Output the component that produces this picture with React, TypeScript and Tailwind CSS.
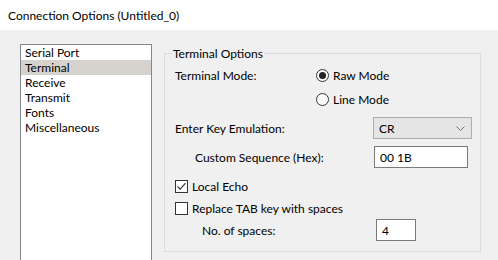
import React from 'react';

const items = ['Serial Port', 'Terminal', 'Receive', 'Transmit', 'Fonts', 'Miscellaneous'];

function Radio({ checked, label }: { checked?: boolean; label: string }) {
  return (
    <label className="flex items-center gap-[4px]">
      <span className="w-[13px] h-[13px] rounded-full border border-[#333] bg-white flex items-center justify-center">
        {checked && <span className="w-[7px] h-[7px] rounded-full bg-[#222]" />}
      </span>
      <span>{label}</span>
    </label>
  );
}

function Check({ checked, label }: { checked?: boolean; label: string }) {
  return (
    <label className="flex items-center gap-[4px]">
      <span className="w-[13px] h-[13px] border border-[#333] bg-white flex items-center justify-center">
        {checked && (
          <svg width="11" height="11" viewBox="0 0 11 11">
            <path d="M1.5 5.5 L4.2 8.2 L9.5 2.2" fill="none" stroke="#333" strokeWidth="1.1" />
          </svg>
        )}
      </span>
      <span>{label}</span>
    </label>
  );
}

export default function App() {
  return (
    <div className="w-[498px] h-[260px] bg-[#f0f0f0] overflow-hidden text-[12px] leading-[15px] text-black font-['Lato','Noto_Sans',sans-serif]">
      {/* Title */}
      <div className="h-[30px] bg-white px-[8px] flex items-center">Connection Options (Untitled_0)</div>

      <div className="flex pl-[20px] pt-[14px]">
        {/* Category list */}
        <ul className="w-[132px] h-[240px] shrink-0 border border-[#828790] bg-white">
          {items.map((it) => (
            <li key={it} className={`h-[15px] pl-[4px] ${it === 'Terminal' ? 'bg-[#d6d3cf]' : ''}`}>
              {it}
            </li>
          ))}
        </ul>

        {/* Terminal options group */}
        <fieldset className="ml-[12px] mt-[2px] w-[317px] h-[206px] border border-[#dcdcdc] pl-[10px]">
          <legend className="ml-[-3px] px-[1px]">Terminal Options</legend>

          <div className="mt-[2px] flex">
            <div className="w-[141px] h-[24px] flex items-center">Terminal Mode:</div>
            <div className="flex flex-col">
              <div className="h-[24px] flex items-center">
                <Radio checked label="Raw Mode" />
              </div>
              <div className="h-[24px] flex items-center">
                <Radio label="Line Mode" />
              </div>
            </div>
          </div>

          <div className="mt-[6px] flex items-center">
            <div className="w-[198px]">Enter Key Emulation:</div>
            <div className="w-[99px] h-[22px] border border-[#adadad] bg-[#e5e5e5] flex items-center justify-between pl-[5px] pr-[6px]">
              <span>CR</span>
              <svg width="9" height="5" viewBox="0 0 9 5">
                <path d="M0.5 0.5 L4.5 4.5 L8.5 0.5" fill="none" stroke="#707070" strokeWidth="1" />
              </svg>
            </div>
          </div>

          <div className="mt-[7px] flex items-center">
            <div className="w-[199px] pl-[20px]">Custom Sequence (Hex):</div>
            <div className="w-[94px] h-[22px] border border-[#7a7a7a] bg-white flex items-center pl-[5px]">00 1B</div>
          </div>

          <div className="mt-[7px] h-[22px] flex items-center">
            <Check checked label="Local Echo" />
          </div>
          <div className="h-[22px] flex items-center">
            <Check label="Replace TAB key with spaces" />
          </div>

          <div className="flex items-center">
            <div className="w-[201px] pl-[27px]">No. of spaces:</div>
            <div className="w-[40px] h-[22px] border border-[#7a7a7a] bg-white flex items-center pl-[5px]">4</div>
          </div>
        </fieldset>
      </div>
    </div>
  );
}
